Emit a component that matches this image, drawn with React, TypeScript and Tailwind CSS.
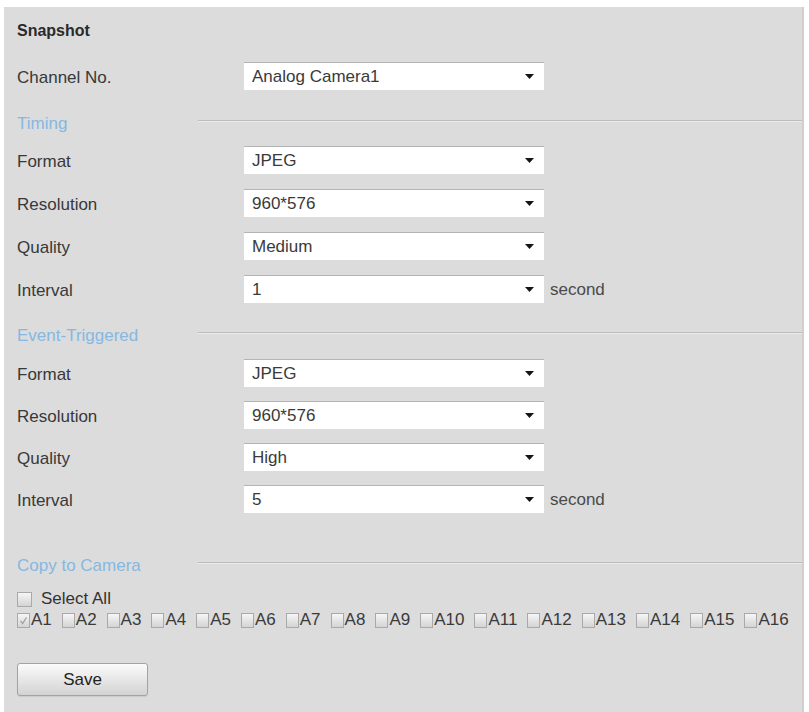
import React from 'react';

const FONT = { fontFamily: '"Liberation Sans", Arial, sans-serif' };

const SelectBox: React.FC<{ value: string; unit?: string }> = ({ value, unit }) => (
  <div className="flex items-center">
    <div className="w-[300px] h-[28px] bg-white border-t border-[#b4b4b4] flex items-center justify-between pl-[8px] pr-[10px]">
      <span className="text-[17px] text-[#3a3a3a]">{value}</span>
      <svg width="9" height="5" viewBox="0 0 9 5">
        <path d="M0 0 L9 0 L4.5 5 Z" fill="#151515" />
      </svg>
    </div>
    {unit && <span className="ml-[6px] mt-[2px] text-[17px] text-[#4a4a4a]">{unit}</span>}
  </div>
);

const Row: React.FC<{ label: string; value: string; unit?: string; className?: string }> = ({ label, value, unit, className }) => (
  <div className={`flex items-center h-[28px] ${className ?? ''}`}>
    <div className="w-[227px] text-[17px] text-[#383838] pt-[4px]">{label}</div>
    <SelectBox value={value} unit={unit} />
  </div>
);

const SectionHeader: React.FC<{ title: string; className?: string }> = ({ title, className }) => (
  <div className={`flex items-center h-[20px] ${className ?? ''}`}>
    <div className="w-[181px] text-[17px] text-[#85b8e2] pt-[2px]">{title}</div>
    <div className="flex-1 flex flex-col mb-[4px]">
      <div className="h-px bg-[#bcbcbc]" />
      <div className="h-px bg-[#ebebeb]" />
    </div>
  </div>
);

const Checkbox: React.FC<{ checked?: boolean; className?: string }> = ({ checked, className }) => (
  <div className={`relative border border-[#a9a9a9] bg-gradient-to-b from-[#f6f6f6] to-[#d4d4d4] ${className ?? ''}`}>
    {checked && (
      <svg className="absolute inset-0" viewBox="0 0 13 15" width="100%" height="100%">
        <path d="M3 8 L5.5 11 L10 4" stroke="#9a9a9a" strokeWidth="1.4" fill="none" />
      </svg>
    )}
  </div>
);

const cameras = Array.from({ length: 16 }, (_, i) => `A${i + 1}`);

const App: React.FC = () => {
  return (
    <div className="bg-white w-[809px] h-[712px] pt-[7px] pl-[4px] overflow-hidden" style={FONT}>
      <div className="w-[800px] h-[705px] bg-[#dcdcdc] border-r-2 border-[#cfcfcf] pl-[13px] pt-[14px] flex flex-col">
        <div className="h-[20px] text-[16px] font-bold text-[#2a2a2a] leading-[20px]">Snapshot</div>

        <Row label="Channel No." value="Analog Camera1" className="mt-[21px]" />

        <SectionHeader title="Timing" className="mt-[23px]" />
        <div className="flex flex-col gap-[15px] mt-[13px]">
          <Row label="Format" value="JPEG" />
          <Row label="Resolution" value="960*576" />
          <Row label="Quality" value="Medium" />
          <Row label="Interval" value="1" unit="second" />
        </div>

        <SectionHeader title="Event-Triggered" className="mt-[22px]" />
        <div className="flex flex-col gap-[14px] mt-[14px]">
          <Row label="Format" value="JPEG" />
          <Row label="Resolution" value="960*576" />
          <Row label="Quality" value="High" />
          <Row label="Interval" value="5" unit="second" />
        </div>

        <SectionHeader title="Copy to Camera" className="mt-[42px]" />

        <div className="flex items-center h-[20px] mt-[14px]">
          <Checkbox className="w-[15px] h-[15px]" />
          <span className="ml-[9px] text-[17px] text-[#333]">Select All</span>
        </div>

        <div className="flex items-center h-[20px] mt-[1px]">
          {cameras.map((c, i) => (
            <div key={c} className="flex items-center mr-[10px]">
              <Checkbox checked={i === 0} className="w-[13px] h-[15px]" />
              <span className="ml-[1px] text-[17px] text-[#3a3a3a]">{c}</span>
            </div>
          ))}
        </div>

        <button className="mt-[33px] w-[131px] h-[33px] rounded-[3px] border border-[#a3a3a3] bg-gradient-to-b from-[#fbfbfb] to-[#d3d3d3] text-[17px] text-[#222] shadow-[0_1px_1px_rgba(0,0,0,0.08)]">
          Save
        </button>
      </div>
    </div>
  );
};

export default App;
